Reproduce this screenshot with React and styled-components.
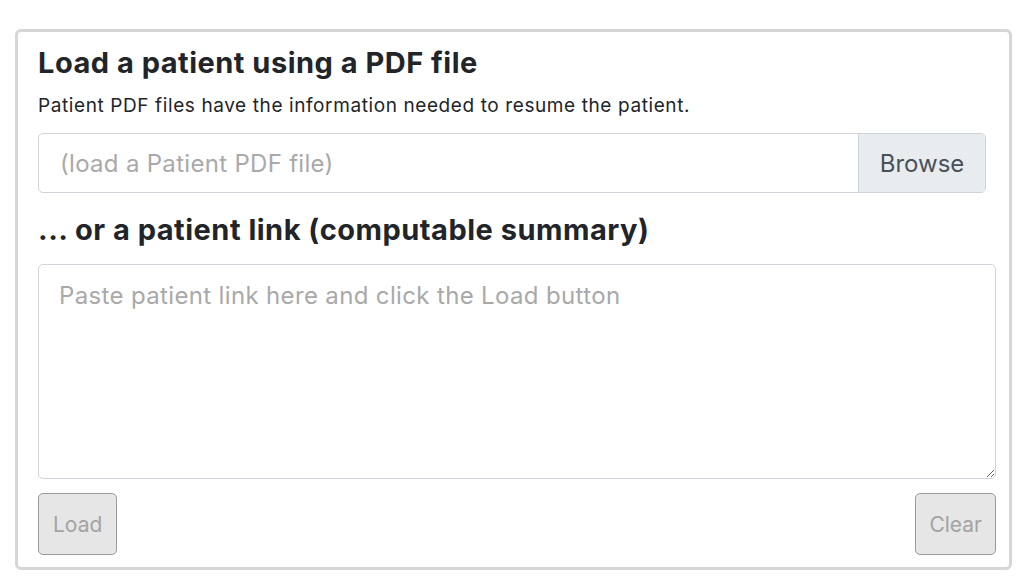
import React from "react";
import styled, { createGlobalStyle } from "styled-components";

const Global = createGlobalStyle`
  html, body { margin: 0; padding: 0; background: #fff; }
  body { font-family: Inter, "Noto Sans", "Liberation Sans", sans-serif; color: #212529; }
  * { box-sizing: border-box; }
`;

const Page = styled.div`
  padding: 29px 12px 0 15px;
  width: 1024px;
  height: 581px;
`;

const Card = styled.div`
  width: 997px;
  height: 541px;
  border: 3px solid #d6d6d6;
  border-radius: 6px;
  padding: 13px 13px 12px 20px;
  display: flex;
  flex-direction: column;
`;

const Heading = styled.h2`
  margin: 0;
  font-size: 29px;
  font-weight: 700;
  line-height: 36px;
  letter-spacing: 0.5px;
  color: #212529;
`;

const Note = styled.p`
  margin: 13px 0 0;
  font-size: 19px;
  line-height: 23px;
  letter-spacing: 0.6px;
  color: #212529;
`;

const FileRow = styled.div`
  margin: 16px 10px 0 0;
  height: 60px;
  display: flex;
  border: 1px solid #ced4da;
  border-radius: 5px;
  overflow: hidden;
`;

const FileLabel = styled.div`
  flex: 1;
  display: flex;
  align-items: center;
  padding-left: 21px;
  font-size: 24px;
  letter-spacing: 0.3px;
  color: #a9a9a9;
`;

const BrowseBtn = styled.div`
  width: 127px;
  display: flex;
  align-items: center;
  justify-content: center;
  background: #e9ecef;
  border-left: 1px solid #ced4da;
  font-size: 24px;
  color: #495057;
`;

const SubHeading = styled(Heading)`
  margin-top: 19px;
`;

const LinkArea = styled.textarea`
  margin-top: 16px;
  height: 215px;
  width: 100%;
  border: 1px solid #ced4da;
  border-radius: 5px;
  padding: 16px 20px;
  font-family: inherit;
  font-size: 24px;
  letter-spacing: 0.35px;
  line-height: 30px;
  resize: vertical;
  outline: none;
  &::placeholder { color: #a9a9a9; }
`;

const Actions = styled.div`
  margin-top: 14px;
  display: flex;
  justify-content: space-between;
`;

const Btn = styled.button`
  height: 62px;
  padding: 0 ${p => p.$pad}px;
  background: #e6e6e6;
  border: 1px solid #9a9a9a;
  border-radius: 5px;
  font-family: inherit;
  font-size: 21px;
  color: #a3a3a3;
`;

export default function App() {
  return (
    <Page>
      <Global />
      <Card>
        <Heading>Load a patient using a PDF file</Heading>
        <Note>Patient PDF files have the information needed to resume the patient.</Note>
        <FileRow>
          <FileLabel>(load a Patient PDF file)</FileLabel>
          <BrowseBtn>Browse</BrowseBtn>
        </FileRow>
        <SubHeading>... or a patient link (computable summary)</SubHeading>
        <LinkArea placeholder="Paste patient link here and click the Load button" />
        <Actions>
          <Btn $pad={14} disabled>Load</Btn>
          <Btn $pad={13} disabled>Clear</Btn>
        </Actions>
      </Card>
    </Page>
  );
}
